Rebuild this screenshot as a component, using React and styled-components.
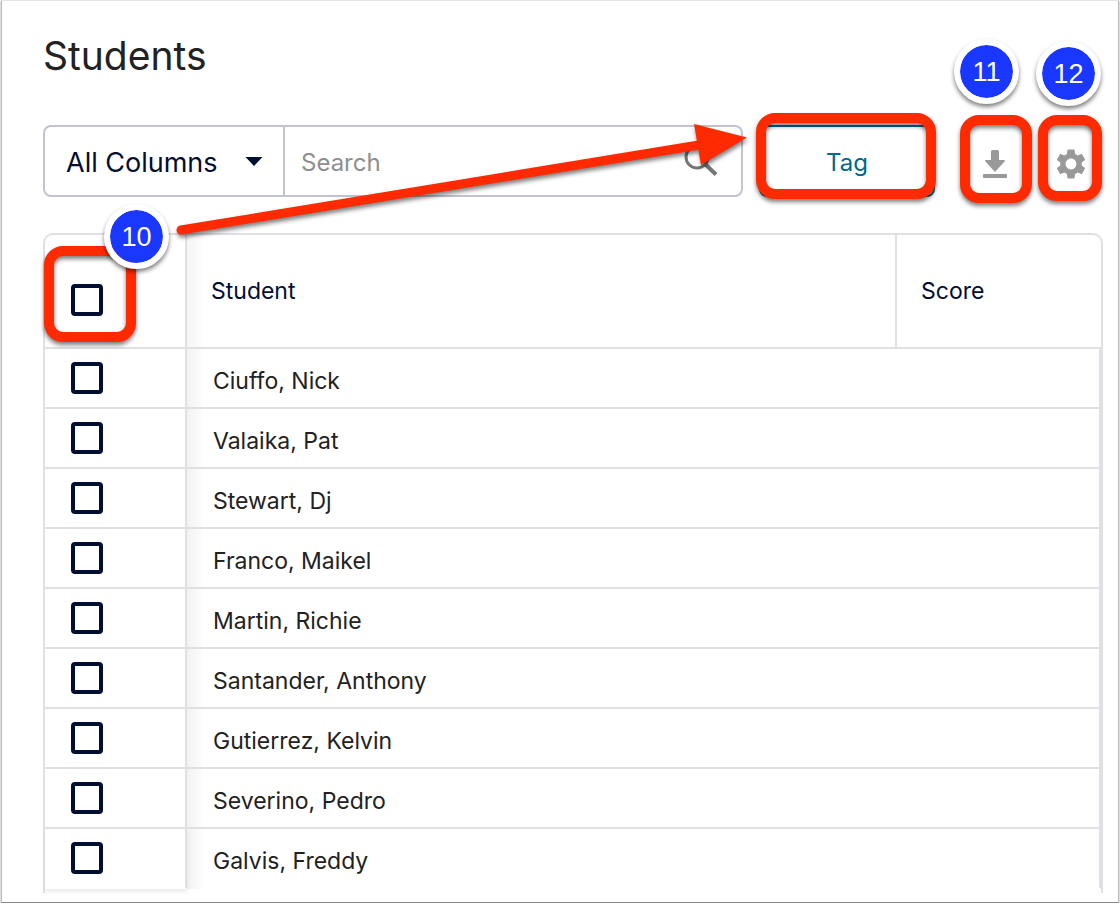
import React from 'react'
import styled, { createGlobalStyle } from 'styled-components'
import { MdSettings } from 'react-icons/md'

const students = [
  'Ciuffo, Nick',
  'Valaika, Pat',
  'Stewart, Dj',
  'Franco, Maikel',
  'Martin, Richie',
  'Santander, Anthony',
  'Gutierrez, Kelvin',
  'Severino, Pedro',
  'Galvis, Freddy',
]

function App() {
  return (
    <>
      <GlobalStyle />
      <Page>
        <Title>Students</Title>
        <Toolbar>
          <SearchGroup>
            <SelectBox>
              <select aria-label='Search in'>
                <option>All Columns</option>
              </select>
              <svg width='18' height='9' viewBox='0 0 18 9' aria-hidden='true'>
                <path d='M0.5 0h17L9 9z' fill='#020e31' />
              </svg>
            </SelectBox>
            <SearchBox>
              <input type='search' placeholder='Search' aria-label='Search' />
              <svg width='34' height='34' viewBox='0 0 34 34' aria-hidden='true'>
                <circle cx='13' cy='13' r='11' fill='none' stroke='#757575' strokeWidth='3' />
                <path d='M21.500 20.500L32 30.500' stroke='#757575' strokeWidth='4' />
              </svg>
            </SearchBox>
            <Arrow width='710' height='130' viewBox='0 0 710 130' aria-hidden='true'>
              <path d='M138 113L656 28' stroke='#ff2a00' strokeWidth='9' strokeLinecap='round' />
              <path d='M651 7L704 20.500L658 48z' fill='#ff2a00' />
            </Arrow>
          </SearchGroup>
          <Target>
            <TagButton type='button'>Tag</TagButton>
            <Ring $inset='-12px -1px -2px -3px' />
          </Target>
          <Tools>
            <Target>
              <IconButton type='button' aria-label='Download'>
                <svg width='24' height='28' viewBox='0 0 24 28'>
                  <path
                    d='M9.500 0h5a1.500 1.500 0 0 1 1.500 1.500V10h5.300a0.700 0.700 0 0 1 0.500 1.200L12.700 21.300a1 1 0 0 1-1.400 0L2.200 11.200a0.700 0.700 0 0 1 0.500-1.200H8V1.500A1.500 1.500 0 0 1 9.500 0z'
                    fill='#999'
                  />
                  <rect y='24' width='24' height='4' rx='1' fill='#999' />
                </svg>
              </IconButton>
              <Ring $inset='-10px -17px -6px -15px' />
              <Badge $top='-86px' $left='-21px'>11</Badge>
            </Target>
            <Target>
              <IconButton type='button' aria-label='Settings'>
                <MdSettings size={36} color='#999' />
              </IconButton>
              <Ring $inset='-10px -11px -4px -13px' />
              <Badge $top='-84px' $left='-15px'>12</Badge>
            </Target>
          </Tools>
        </Toolbar>
        <Table>
          <thead>
            <tr>
              <PickHead>
                <Target>
                  <Checkbox type='checkbox' aria-label='Select all students' />
                  <Ring $inset='-38px -33px -26px -27px' />
                  <Badge $top='-80px' $left='33px'>10</Badge>
                </Target>
              </PickHead>
              <Head>Student</Head>
              <Head $narrow>Score</Head>
            </tr>
          </thead>
          <tbody>
            {students.map((name) => (
              <Row key={name}>
                <PickCell>
                  <Checkbox type='checkbox' aria-label={`Select ${name}`} />
                </PickCell>
                <NameCell>{name}</NameCell>
                <ScoreCell />
              </Row>
            ))}
          </tbody>
        </Table>
      </Page>
    </>
  )
}

const GlobalStyle = createGlobalStyle`
  * {
    box-sizing: border-box;
  }
  body {
    margin: 0;
    background: #fff;
    color: #222;
    font-family: Inter, sans-serif;
  }
  button, input, select {
    font-family: inherit;
  }
`

const Page = styled.main`
  margin: 0 1px;
  padding: 32px 15px 9px 41px;
  border: 1px solid #bcbcbc;
  border-top-color: #e4e4e4;
  border-bottom-color: #858585;
  box-shadow: 0 1px 2px rgba(0, 0, 0, 0.4);
`

const Title = styled.h1`
  margin: 0 0 46px;
  font-size: 39px;
  line-height: 46px;
  font-weight: 400;
`

const Toolbar = styled.div`
  display: flex;
  height: 72px;
`

const SearchGroup = styled.div`
  position: relative;
  flex: 1;
  display: flex;
  margin-right: 16px;
  border: 2px solid #c1c3d0;
  border-radius: 8px;
`

const SelectBox = styled.div`
  display: flex;
  align-items: center;
  width: 240px;
  padding-right: 20px;
  border-right: 2px solid #c1c3d0;
  select {
    flex: 1;
    height: 100%;
    padding: 2px 0 0 21px;
    appearance: none;
    border: 0;
    background: none;
    color: #020e31;
    font-size: 27px;
  }
`

const SearchBox = styled.div`
  flex: 1;
  display: flex;
  align-items: center;
  padding: 0 23px 0 16px;
  input {
    flex: 1;
    min-width: 0;
    height: 100%;
    padding: 2px 0 0;
    border: 0;
    background: none;
    font-size: 24px;
    &::placeholder {
      color: #8f8f8f;
    }
  }
`

/* points from the header checkbox to the Tag button */
const Arrow = styled.svg`
  position: absolute;
  top: -10px;
  left: -2px;
  pointer-events: none;
  filter: drop-shadow(1px 3px 2px rgba(0, 0, 0, 0.5));
`

const Target = styled.div`
  position: relative;
  display: inline-flex;
`

const Ring = styled.span`
  position: absolute;
  inset: ${(props) => props.$inset};
  border: 10px solid #ff2a00;
  border-radius: 19px;
  filter: drop-shadow(0 3px 2px rgba(0, 0, 0, 0.5));
  pointer-events: none;
`

const Badge = styled.span`
  position: absolute;
  top: ${(props) => props.$top};
  left: ${(props) => props.$left};
  display: flex;
  align-items: center;
  justify-content: center;
  width: 65px;
  height: 65px;
  padding-top: 2px;
  border: 6px solid #fff;
  border-radius: 50%;
  background: #1a37ff;
  background-clip: padding-box;
  box-shadow: 0 3px 4px rgba(0, 0, 0, 0.5);
  color: #fff;
  font-family: 'Liberation Sans', sans-serif;
  font-size: 27px;
  font-weight: 400;
  pointer-events: none;
`

const TagButton = styled.button`
  width: 176px;
  padding: 2px 0 0;
  border: 2px solid #00698c;
  border-radius: 8px;
  background: #fff;
  color: #00698c;
  font-size: 24px;
`

const Tools = styled.div`
  display: flex;
  gap: 36px;
  padding: 0 12px 0 40px;
`

const IconButton = styled.button`
  display: flex;
  align-items: center;
  justify-content: center;
  width: 40px;
  padding: 6px 0 0;
  border: 0;
  background: none;
`

const Table = styled.table`
  width: 100%;
  margin-top: 36px;
  padding-bottom: 4px;
  table-layout: fixed;
  border-collapse: separate;
  border-spacing: 0;
  border: 2px solid #dfe0e5;
  border-bottom: 0;
  border-radius: 10px 10px 0 0;
`

const Head = styled.th`
  width: ${(props) => (props.$narrow ? '206px' : 'auto')};
  height: 114px;
  padding: 0 24px;
  border-bottom: 2px solid #e0e0e2;
  color: #020e31;
  font-size: 23px;
  font-weight: 400;
  text-align: left;
  & + & {
    border-left: 2px solid #e0e0e2;
  }
  &:nth-child(2) {
    background: linear-gradient(to right, rgba(0, 0, 0, 0.04), transparent 18px);
  }
`

const PickHead = styled.th`
  width: 142px;
  padding: 22px 26px 0;
  border-right: 2px solid #e0e0e2;
  border-bottom: 2px solid #e0e0e2;
  text-align: left;
`

const Row = styled.tr`
  td {
    height: 60px;
    border-bottom: 2px solid #e0e0e2;
  }
  &:last-child td {
    border-bottom-color: transparent;
  }
  &:last-child td:first-child {
    box-shadow: 0 3px 4px rgba(0, 0, 0, 0.08);
  }
`

const PickCell = styled.td`
  padding: 0 26px;
  border-right: 2px solid #e0e0e2;
`

const NameCell = styled.td`
  padding: 5px 26px 0;
  background: linear-gradient(to right, rgba(0, 0, 0, 0.05), transparent 18px);
  font-size: 23px;
`

const ScoreCell = styled.td`
  border-right: 2px solid #e0e0e2;
`

const Checkbox = styled.input`
  appearance: none;
  display: block;
  width: 32px;
  height: 32px;
  margin: 0;
  border: 4px solid #020e31;
  border-radius: 4px;
  background: #fff;
  &:checked {
    background: #020e31;
  }
`

export default App
